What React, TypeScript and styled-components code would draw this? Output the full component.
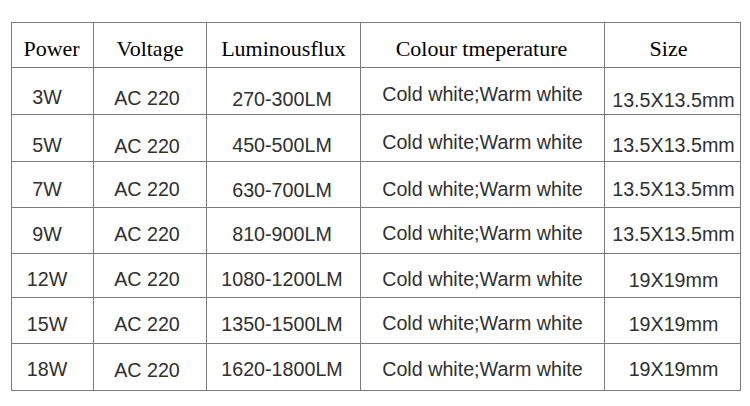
import React from "react";
import styled, { createGlobalStyle } from "styled-components";

const Global = createGlobalStyle`
  html, body { margin: 0; padding: 0; background: #ffffff; }
  body { width: 750px; height: 406px; overflow: hidden; }
`;

const Page = styled.div`
  width: 750px;
  height: 406px;
  padding: 22px 0 0 11px;
  box-sizing: border-box;
  background: #ffffff;
`;

const Table = styled.div`
  display: grid;
  grid-template-columns: 82px 113px 154px 244px 136px;
  grid-template-rows: 45px 47px 47px 46px 46px 44px 46px 47px;
  width: 730px;
  box-sizing: border-box;
  border-left: 1px solid #7c7c7c;
  border-top: 1px solid #7c7c7c;
`;

const Cell = styled.div<{ $dy: number; $dx?: number }>`
  box-sizing: border-box;
  border-right: 1px solid #7c7c7c;
  border-bottom: 1px solid #7c7c7c;
  text-align: center;
  white-space: nowrap;
  padding-top: ${(p) => p.$dy}px;
  padding-right: ${(p) => (p.$dx && p.$dx > 0 ? p.$dx : 0)}px;
  padding-left: ${(p) => (p.$dx && p.$dx < 0 ? -p.$dx : 0)}px;
`;

const HeadCell = styled(Cell)`
  font-family: "Liberation Serif", "Times New Roman", serif;
  font-size: 22px;
  line-height: 24px;
  color: #000000;
`;

const BodyCell = styled(Cell)`
  font-family: "Liberation Sans", Arial, sans-serif;
  font-size: 19.7px;
  line-height: 22px;
  color: #303030;
`;

const headers = ["Power", "Voltage", "Luminousflux", "Colour tmeperature", "Size"];

type Row = { cells: string[]; dy: number[] };

const rows: Row[] = [
  { cells: ["3W", "AC 220", "270-300LM", "Cold white;Warm white", "13.5X13.5mm"], dy: [18, 19, 20, 15, 21] },
  { cells: ["5W", "AC 220", "450-500LM", "Cold white;Warm white", "13.5X13.5mm"], dy: [19, 20, 19, 16, 19] },
  { cells: ["7W", "AC 220", "630-700LM", "Cold white;Warm white", "13.5X13.5mm"], dy: [16, 16, 17, 16, 16] },
  { cells: ["9W", "AC 220", "810-900LM", "Cold white;Warm white", "13.5X13.5mm"], dy: [15, 15, 15, 14, 15] },
  { cells: ["12W", "AC 220", "1080-1200LM", "Cold white;Warm white", "19X19mm"], dy: [14, 14, 14, 14, 15] },
  { cells: ["15W", "AC 220", "1350-1500LM", "Cold white;Warm white", "19X19mm"], dy: [15, 15, 15, 14, 15] },
  { cells: ["18W", "AC 220", "1620-1800LM", "Cold white;Warm white", "19X19mm"], dy: [14, 15, 14, 14, 14] },
];

const bodyDx = [11, 6, 3, 0, -2];
const headDx = [2, 0, 0, 2, 8];

export default function App() {
  return (
    <>
      <Global />
      <Page>
        <Table>
          {headers.map((h, i) => (
            <HeadCell key={h} $dy={14} $dx={headDx[i]}>
              {h}
            </HeadCell>
          ))}
          {rows.map((r, ri) =>
            r.cells.map((c, ci) => (
              <BodyCell key={`${ri}-${ci}`} $dy={r.dy[ci]} $dx={bodyDx[ci]}>
                {c}
              </BodyCell>
            ))
          )}
        </Table>
      </Page>
    </>
  );
}
